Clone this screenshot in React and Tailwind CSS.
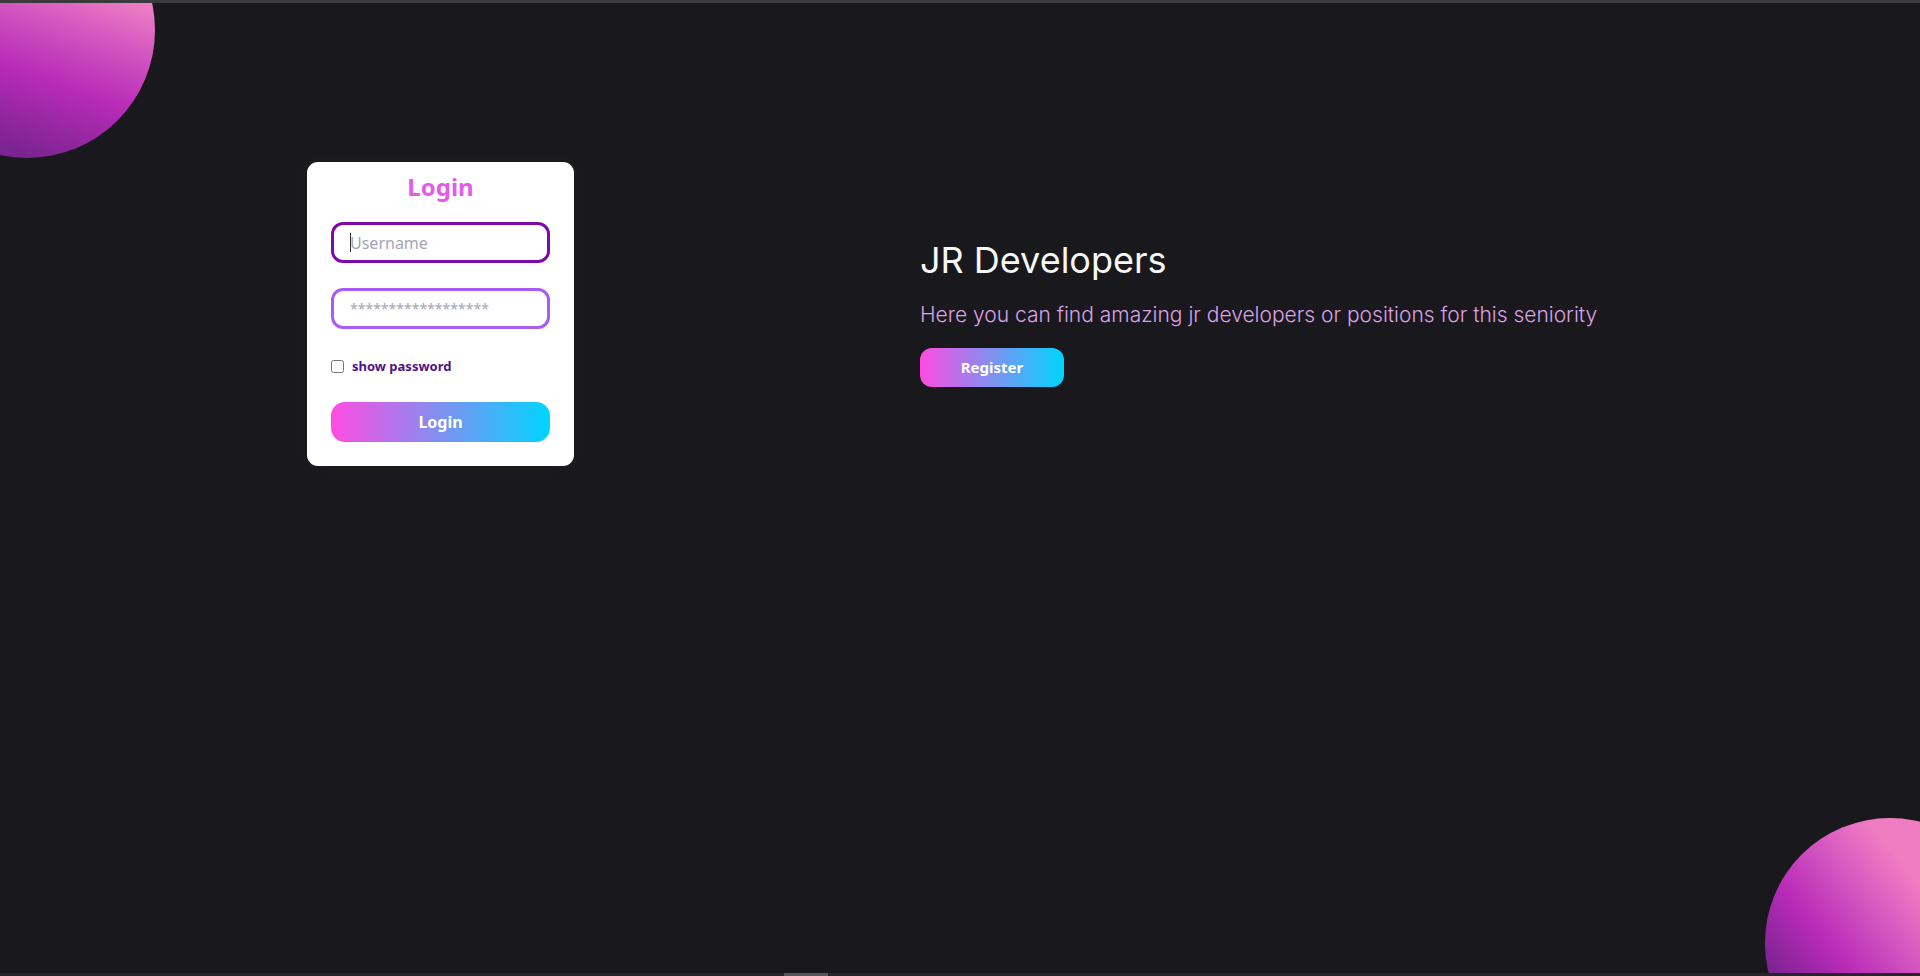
import React from "react";

export default function App() {
  return (
    <div className="relative w-full h-[976px] overflow-hidden bg-[#19181d] font-['Noto_Sans',sans-serif]">
      <div className="absolute left-[-101px] top-[-98px] w-[256px] h-[256px] rounded-full bg-[linear-gradient(200deg,#f385c5_28%,#d458c0_44%,#b82cb8_62%,#7b2391_86%)]" />
      <div className="absolute right-[-95px] bottom-[-92px] w-[250px] h-[250px] rounded-full bg-[linear-gradient(231deg,#f07cc2_33%,#d457c0_48%,#b92bb8_64%,#7a2391_82%)]" />
      <div className="absolute top-0 left-0 right-0 h-[3px] bg-[#3b3b3e]" />
      <div className="absolute bottom-0 left-0 right-0 h-[3px] bg-[#26262a]">
        <div className="absolute left-[784px] top-0 h-[3px] w-[44px] bg-[#55555a]" />
      </div>

      <div className="relative flex items-start pl-[307px] pt-[162px]">
        <div className="w-[267px] bg-white rounded-[11px] px-[24px] pt-[9px] pb-[24px] shadow-[0_0_24px_rgba(255,255,255,0.03)]">
          <h1 className="text-center text-[24px] leading-[32px] font-bold text-[#e35be6]">Login</h1>
          <div className="relative mt-[19px]">
            <input
              type="text"
              placeholder="Username"
              className="block w-full h-[41px] rounded-[12px] border-[3px] border-[#7c0aab] px-[16px] text-[16px] text-[#333] placeholder:text-[#a3a6b8] outline-none bg-white"
            />
            <span className="absolute left-[19px] top-[11px] w-px h-[19px] bg-[#333]" />
          </div>
          <input
            type="password"
            placeholder="******************"
            className="mt-[25px] block w-full h-[41px] rounded-[12px] border-[3px] border-[#a95cf2] px-[16px] text-[14px] text-[#333] placeholder:text-[#a3a6b8] outline-none bg-white"
          />
          <label className="mt-[27px] flex items-center h-[20px]">
            <input type="checkbox" className="w-[13px] h-[13px] m-0" />
            <span className="ml-[8px] text-[13px] font-bold text-[#52118a] leading-[20px]">show password</span>
          </label>
          <button className="mt-[26px] block w-full h-[40px] rounded-[14px] bg-[linear-gradient(90deg,#ff4ce1,#00d5ff)] text-white text-[16px] font-bold">
            Login
          </button>
        </div>

        <div className="ml-[346px] pt-[76px] font-['Inter',sans-serif]">
          <h2 className="text-[36px] leading-[44px] font-normal text-[#f7f7f7]">JR Developers</h2>
          <p className="mt-[19px] text-[21px] leading-[28px] font-light text-[#dca2e8]">
            Here you can find amazing jr developers or positions for this seniority
          </p>
          <button className="mt-[19px] w-[144px] h-[39px] rounded-[12px] bg-[linear-gradient(90deg,#ff4ce1,#00d5ff)] text-white text-[15px] font-bold font-['Noto_Sans',sans-serif]">
            Register
          </button>
        </div>
      </div>
    </div>
  );
}
